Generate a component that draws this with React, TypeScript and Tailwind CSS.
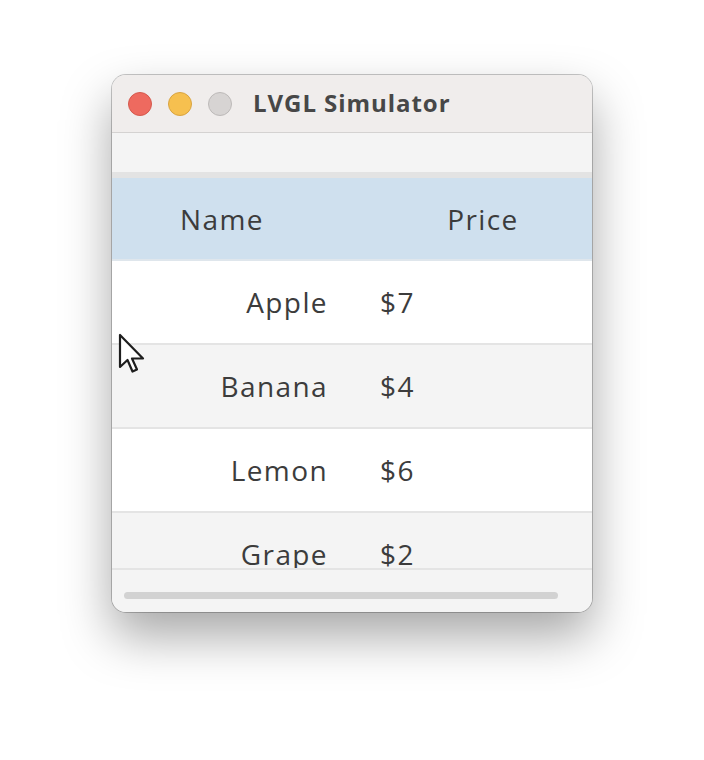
import React from 'react'

const rows = [
  { name: 'Apple', price: '$7' },
  { name: 'Banana', price: '$4' },
  { name: 'Lemon', price: '$6' },
  { name: 'Grape', price: '$2' },
]

const cellFont = { fontFamily: '"Open Sans", "DejaVu Sans", sans-serif' }

export default function App() {
  return (
    <div className="min-h-[760px] w-[704px] bg-white pt-[75px] pl-[112px]">
      <div className="relative flex h-[537px] w-[480px] flex-col overflow-hidden rounded-[14px] bg-[#f4f4f4] shadow-[0_24px_50px_rgba(0,0,0,0.35),0_0_0_1px_rgba(0,0,0,0.22)]">
        {/* Title bar */}
        <div className="flex h-[58px] shrink-0 items-center border-b border-[#d4d2d1] bg-[#f0edec] pl-[16px]">
          <div className="flex items-center gap-[16px]">
            <span className="h-[24px] w-[24px] rounded-full border border-[#d5594d] bg-[#ee6a5f]" />
            <span className="h-[24px] w-[24px] rounded-full border border-[#d9a441] bg-[#f6c04f]" />
            <span className="h-[24px] w-[24px] rounded-full border border-[#bdbab9] bg-[#d7d4d3]" />
          </div>
          <span
            className="ml-[21px] -mt-[2px] text-[24px] font-bold tracking-[0.95px] text-[#474747]"
            style={{ fontFamily: '"Open Sans", Inter, sans-serif' }}
          >
            LVGL Simulator
          </span>
        </div>

        <div className="h-[39px] shrink-0 bg-[#f4f4f4]" />

        {/* Table viewport */}
        <div className="h-[396px] shrink-0 overflow-hidden border-t-[6px] border-[#e3e3e3] text-[28px] tracking-[1.4px] text-[#3c3c3c]" style={cellFont}>
          <div className="-ml-[20px] w-[522px]">
            <div className="flex h-[83px] items-center border-b-2 border-[#dfe6ec] bg-[#cfe0ee]">
              <div className="w-[260px] text-center">Name</div>
              <div className="w-[262px] text-center">Price</div>
            </div>
            {rows.map((r, i) => (
              <div
                key={r.name}
                className={`flex h-[84px] items-center border-b-2 border-[#e4e4e4] ${i % 2 === 0 ? 'bg-white' : 'bg-[#f4f4f4]'}`}
              >
                <div className="w-[260px] pr-[24px] text-right">{r.name}</div>
                <div className="w-[262px] pl-[28px]">{r.price}</div>
              </div>
            ))}
          </div>
        </div>

        <div className="h-[2px] shrink-0 bg-[#e4e4e4]" />

        {/* Bottom scroll area */}
        <div className="h-[42px] shrink-0 bg-[#f4f4f4] pt-[22px] pl-[12px]">
          <div className="h-[7px] w-[434px] rounded-full bg-[#d2d2d2]" />
        </div>

        {/* Mouse cursor */}
        <svg className="absolute left-[6px] top-[258px]" width="30" height="42" viewBox="0 0 30 42">
          <path d="M2 2 L2 34 L9.5 27 L14.5 38.5 L19 36.5 L14 25.5 L25 25.5 Z" fill="#fff" stroke="#1e1e1e" strokeWidth="2.2" strokeLinejoin="round" />
        </svg>
      </div>
    </div>
  )
}
